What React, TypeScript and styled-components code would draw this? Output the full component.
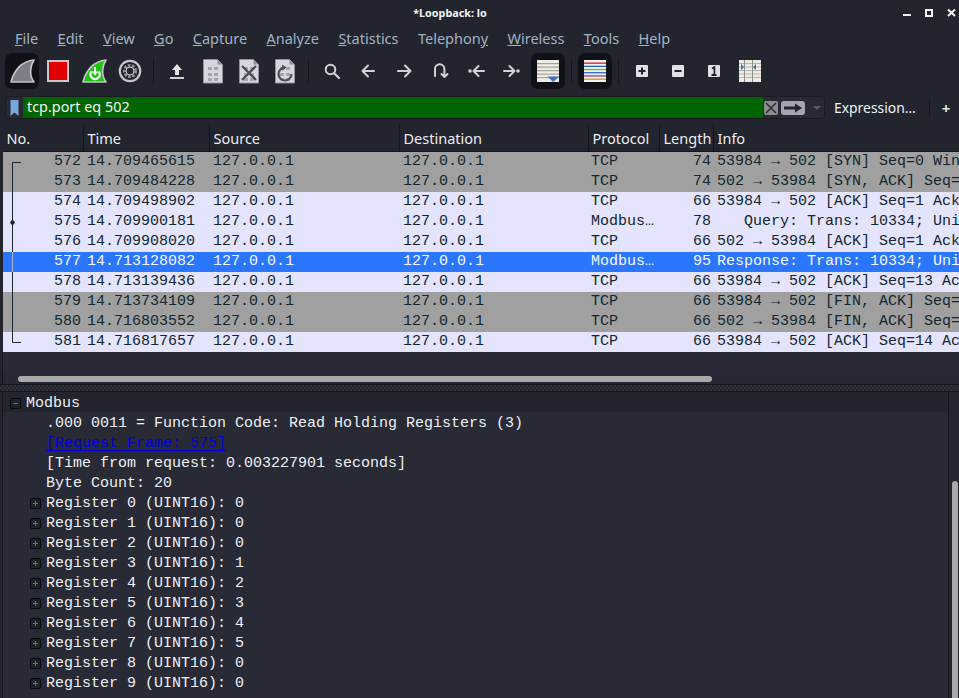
import React from 'react';
import styled, { createGlobalStyle } from 'styled-components';

const MENUS = [
  { before: '', key: 'F', after: 'ile' },
  { before: '', key: 'E', after: 'dit' },
  { before: '', key: 'V', after: 'iew' },
  { before: '', key: 'G', after: 'o' },
  { before: '', key: 'C', after: 'apture' },
  { before: '', key: 'A', after: 'nalyze' },
  { before: '', key: 'S', after: 'tatistics' },
  { before: 'Telephon', key: 'y', after: '' },
  { before: '', key: 'W', after: 'ireless' },
  { before: '', key: 'T', after: 'ools' },
  { before: '', key: 'H', after: 'elp' },
];

type Tone = 'grey' | 'light' | 'selected';
type Mark = 'first' | 'line' | 'dot' | 'last';

const PACKETS: { no: number; time: string; proto: string; len: number; info: string; tone: Tone; mark: Mark }[] = [
  { no: 572, time: '14.709465615', proto: 'TCP', len: 74, info: '53984 → 502 [SYN] Seq=0 Win=65495 Len=0', tone: 'grey', mark: 'first' },
  { no: 573, time: '14.709484228', proto: 'TCP', len: 74, info: '502 → 53984 [SYN, ACK] Seq=0 Ack=1', tone: 'grey', mark: 'line' },
  { no: 574, time: '14.709498902', proto: 'TCP', len: 66, info: '53984 → 502 [ACK] Seq=1 Ack=1 Win=65536', tone: 'light', mark: 'line' },
  { no: 575, time: '14.709900181', proto: 'Modbus…', len: 78, info: '   Query: Trans: 10334; Unit: 1, Func: 3', tone: 'light', mark: 'dot' },
  { no: 576, time: '14.709908020', proto: 'TCP', len: 66, info: '502 → 53984 [ACK] Seq=1 Ack=13 Win=65536', tone: 'light', mark: 'line' },
  { no: 577, time: '14.713128082', proto: 'Modbus…', len: 95, info: 'Response: Trans: 10334; Unit: 1, Func: 3', tone: 'selected', mark: 'line' },
  { no: 578, time: '14.713139436', proto: 'TCP', len: 66, info: '53984 → 502 [ACK] Seq=13 Ack=30 Win=65536', tone: 'light', mark: 'line' },
  { no: 579, time: '14.713734109', proto: 'TCP', len: 66, info: '53984 → 502 [FIN, ACK] Seq=13 Ack=30', tone: 'grey', mark: 'line' },
  { no: 580, time: '14.716803552', proto: 'TCP', len: 66, info: '502 → 53984 [FIN, ACK] Seq=30 Ack=14', tone: 'grey', mark: 'line' },
  { no: 581, time: '14.716817657', proto: 'TCP', len: 66, info: '53984 → 502 [ACK] Seq=14 Ack=31 Win=65536', tone: 'light', mark: 'last' },
];

const REGISTERS = [0, 0, 0, 1, 2, 3, 4, 5, 0, 0];

const DocPage = ({ children }: { children?: React.ReactNode }) => (
  <svg width="36" height="36" viewBox="0 0 36 36">
    <path d="M8.5 6.5h14l5 5v18.5h-19z" fill="#d5d7de" stroke="#8f929b" />
    <path d="M22.5 6.5v5h5z" fill="#8f929b" />
    {[14, 20, 25].map((y) => (
      <g key={y} fill="#a2a5ae">
        <rect x="13" y={y} width="4" height="3" />
        <rect x="19" y={y} width="4" height="3" />
      </g>
    ))}
    {children}
  </svg>
);

const SharkFin = ({ fill, children }: { fill: string; children?: React.ReactNode }) => (
  <svg width="36" height="36" viewBox="0 0 36 36">
    <path d="M30 7C18 8 10 17 7 29h23C25 22 26 13 30 7z" fill={fill} stroke="#c3c5c9" strokeWidth="1.6" strokeLinejoin="round" />
    {children}
  </svg>
);

const Stroke = ({ d }: { d: string }) => (
  <svg width="36" height="36" viewBox="0 0 36 36">
    <path d={d} fill="none" stroke="#d0d2d8" strokeWidth="2" strokeLinecap="round" strokeLinejoin="round" />
  </svg>
);

const SmallKey = ({ label }: { label: string }) => (
  <svg width="36" height="36" viewBox="0 0 36 36">
    <rect x="12" y="12" width="12" height="12" rx="1" fill="#dfe1e8" />
    {label === '+' && <path d="M14.5 18h7M18 14.5v7" stroke="#22252e" strokeWidth="2" />}
    {label === '-' && <path d="M14.5 18h7" stroke="#22252e" strokeWidth="2" />}
    {label === '1' && <path d="M16 15.5l2.4-1.5v8M15.5 22h5" stroke="#22252e" strokeWidth="1.8" fill="none" />}
  </svg>
);

const LinesIcon = ({ colors }: { colors: string[] }) => (
  <svg width="36" height="36" viewBox="0 0 36 36">
    <rect x="7" y="7" width="22" height="22" fill="#f2f2ee" />
    {colors.map((c, i) => (
      <rect key={i} x="7" y={9.5 + i * 3.2} width="22" height="1.3" fill={c} />
    ))}
  </svg>
);

const App = () => {
  return (
    <Window>
      <GlobalStyle />
      <TitleBar>
        <TitleText>*Loopback: lo</TitleText>
        <WindowControls>
          <svg width="12" height="12" viewBox="0 0 12 12"><rect x="1" y="6" width="8" height="2" fill="#f4f4f4" /></svg>
          <svg width="12" height="12" viewBox="0 0 12 12"><rect x="2" y="2" width="6" height="6" fill="none" stroke="#f4f4f4" strokeWidth="2" /></svg>
          <svg width="12" height="12" viewBox="0 0 12 12"><path d="M2 1.5l7 6.5M9 1.5L2 8" stroke="#f4f4f4" strokeWidth="2" /></svg>
        </WindowControls>
      </TitleBar>

      <MenuBar>
        {MENUS.map((m) => (
          <MenuItem key={m.before + m.key + m.after}>
            {m.before}<u>{m.key}</u>{m.after}
          </MenuItem>
        ))}
      </MenuBar>

      <ToolBar>
        <ToolButton $active><SharkFin fill="#7c7f87" /></ToolButton>
        <ToolButton>
          <svg width="36" height="36" viewBox="0 0 36 36">
            <rect x="8" y="8" width="20" height="20" fill="#e10000" stroke="#c8c8c8" strokeWidth="2" />
          </svg>
        </ToolButton>
        <ToolButton>
          <SharkFin fill="#22c414">
            <path d="M15.6 18.5a4.6 4.6 0 1 0 7 0" fill="none" stroke="#fff" strokeWidth="2.2" />
            <path d="M19 14v7" stroke="#fff" strokeWidth="2" />
            <path d="M15.8 18.5L19 22.5l3.2-4z" fill="#fff" />
          </SharkFin>
        </ToolButton>
        <ToolButton>
          <svg width="36" height="36" viewBox="0 0 36 36">
            <circle cx="18" cy="18" r="10.2" fill="none" stroke="#c4c6cc" strokeWidth="2.2" />
            <circle cx="18" cy="18" r="5.4" fill="none" stroke="#8d9097" strokeWidth="3.4" strokeDasharray="2.4 1.4" />
            <circle cx="18" cy="18" r="4" fill="none" stroke="#c4c6cc" strokeWidth="1" />
          </svg>
        </ToolButton>
        <ToolSeparator />
        <ToolButton>
          <svg width="36" height="36" viewBox="0 0 36 36">
            <path d="M18 11l5 6h-3v5h-4v-5h-3z" fill="#e4e5e9" />
            <rect x="11" y="24" width="14" height="2" fill="#d0d2d8" />
          </svg>
        </ToolButton>
        <ToolButton><DocPage /></ToolButton>
        <ToolButton>
          <DocPage><path d="M11 13l14 14M25 13L11 27" stroke="#4b4e57" strokeWidth="2.4" /></DocPage>
        </ToolButton>
        <ToolButton>
          <DocPage>
            <path d="M24.5 21a6.5 6.5 0 1 1-6.5-6.5" fill="none" stroke="#4b4e57" strokeWidth="2.2" />
            <path d="M15 11.5l4.5 3-4 3z" fill="#4b4e57" />
          </DocPage>
        </ToolButton>
        <ToolSeparator />
        <ToolButton>
          <svg width="36" height="36" viewBox="0 0 36 36">
            <circle cx="16.5" cy="16.5" r="4.8" fill="none" stroke="#d0d2d8" strokeWidth="2" />
            <path d="M20 20l5 5" stroke="#d0d2d8" strokeWidth="2.2" strokeLinecap="round" />
          </svg>
        </ToolButton>
        <ToolButton><Stroke d="M24 18H13M18 12.5L12.5 18l5.5 5.5" /></ToolButton>
        <ToolButton><Stroke d="M12 18h12M19 12.5l5.5 5.5-5.5 5.5" /></ToolButton>
        <ToolButton><Stroke d="M13 23v-7a4.7 4.7 0 0 1 9.4 0v7M19.5 21l3 3 3-3" /></ToolButton>
        <ToolButton>
          <svg width="36" height="36" viewBox="0 0 36 36">
            <circle cx="12" cy="18" r="1.8" fill="#d0d2d8" />
            <path d="M26 18H16M20.5 13L15.5 18l5 5" fill="none" stroke="#d0d2d8" strokeWidth="2" strokeLinecap="round" strokeLinejoin="round" />
          </svg>
        </ToolButton>
        <ToolButton>
          <svg width="36" height="36" viewBox="0 0 36 36">
            <circle cx="24" cy="18" r="1.8" fill="#d0d2d8" />
            <path d="M10 18h10M15.5 13l5 5-5 5" fill="none" stroke="#d0d2d8" strokeWidth="2" strokeLinecap="round" strokeLinejoin="round" />
          </svg>
        </ToolButton>
        <ToolButton $active>
          <svg width="36" height="36" viewBox="0 0 36 36">
            <rect x="7" y="7" width="22" height="22" fill="#ecece4" />
            {[10, 13.5, 17, 20.5, 24].map((y) => <rect key={y} x="7" y={y} width="22" height="1.2" fill="#a3a59c" />)}
            <path d="M17.5 23.5h11.5l-5.7 5.5z" fill="#3a70b5" />
          </svg>
        </ToolButton>
        <ToolSeparator />
        <ToolButton $active>
          <LinesIcon colors={['#e8161c', '#2a62c8', '#62c020', '#2a62c8', '#8a3fa8', '#c89a10']} />
        </ToolButton>
        <ToolSeparator />
        <ToolButton><SmallKey label="+" /></ToolButton>
        <ToolButton><SmallKey label="-" /></ToolButton>
        <ToolButton><SmallKey label="1" /></ToolButton>
        <ToolButton>
          <svg width="36" height="36" viewBox="0 0 36 36">
            <rect x="7" y="7" width="22" height="22" fill="#ecece4" />
            {[10, 13.5, 17, 20.5, 24].map((y) => <rect key={y} x="7" y={y} width="22" height="1" fill="#b5b7ae" />)}
            <path d="M12.5 7v22M20.5 7v22" stroke="#8d8f88" strokeWidth="1" />
            <path d="M9 11l3 3-3 3zM24 11l-3 3 3 3z" fill="#3a70b5" />
          </svg>
        </ToolButton>
      </ToolBar>

      <FilterRow>
        <FilterBox>
          <BookmarkSlot>
            <svg width="9" height="18" viewBox="0 0 9 18"><path d="M0.5 1h8v16L4.5 13.5.5 17z" fill="#7ba7dc" /></svg>
          </BookmarkSlot>
          <FilterInput>tcp.port eq 502</FilterInput>
          <ClearButton>
            <svg width="14" height="14" viewBox="0 0 14 14"><path d="M2 2l10 10M12 2L2 12" stroke="#2b2d34" strokeWidth="1.6" /></svg>
          </ClearButton>
          <ApplyButton>
            <svg width="20" height="10" viewBox="0 0 20 10"><path d="M1 3.5h11V0.5L19 5l-7 4.5V6.5H1z" fill="#23252c" /></svg>
          </ApplyButton>
          <Caret />
        </FilterBox>
        <ExpressionLabel>Expression…</ExpressionLabel>
        <FilterSeparator />
        <PlusLabel>+</PlusLabel>
      </FilterRow>

      <PacketPane>
        <HeaderRow>
          <HeaderCell>No.</HeaderCell>
          <HeaderCell>Time</HeaderCell>
          <HeaderCell>Source</HeaderCell>
          <HeaderCell>Destination</HeaderCell>
          <HeaderCell>Protocol</HeaderCell>
          <HeaderCell>Length</HeaderCell>
          <HeaderCell>Info</HeaderCell>
        </HeaderRow>
        {PACKETS.map((p) => (
          <PacketRow key={p.no} $tone={p.tone}>
            <NumberCell>
              <FrameMark viewBox="0 0 20 20" width="20" height="20">
                <path
                  d={
                    p.mark === 'first' ? 'M9.5 10.5H18M9.5 10.5V20'
                      : p.mark === 'last' ? 'M9.5 0V10.5H18'
                      : 'M9.5 0V20'
                  }
                  fill="none"
                  stroke={p.tone === 'selected' ? '#a9b4c8' : '#1a2a33'}
                />
                {p.mark === 'dot' && <circle cx="9.5" cy="10.5" r="2.2" fill="#1a2a33" />}
              </FrameMark>
              {p.no}
            </NumberCell>
            <PacketCell>{p.time}</PacketCell>
            <PacketCell>127.0.0.1</PacketCell>
            <PacketCell>127.0.0.1</PacketCell>
            <ProtocolCell>{p.proto}</ProtocolCell>
            <LengthCell>{p.len}</LengthCell>
            <PacketCell>{p.info}</PacketCell>
          </PacketRow>
        ))}
        <BlankArea />
        <HorizontalTrack>
          <HorizontalThumb />
        </HorizontalTrack>
      </PacketPane>

      <Splitter />

      <DetailPane>
        <DetailList>
          <DetailRow $top>
            <Expander />
            Modbus
          </DetailRow>
          <DetailRow $indent>.000 0011 = Function Code: Read Holding Registers (3)</DetailRow>
          <DetailRow $indent><FrameLink>[Request Frame: 575]</FrameLink></DetailRow>
          <DetailRow $indent>[Time from request: 0.003227901 seconds]</DetailRow>
          <DetailRow $indent>Byte Count: 20</DetailRow>
          {REGISTERS.map((value, i) => (
            <DetailRow key={i} $indent>
              <ChildExpander />
              Register {i} (UINT16): {value}
            </DetailRow>
          ))}
        </DetailList>
        <VerticalTrack>
          <VerticalThumb />
        </VerticalTrack>
      </DetailPane>
    </Window>
  );
};

export default App;

const GlobalStyle = createGlobalStyle`
  html, body {
    margin: 0;
    padding: 0;
    background: #22252e;
  }
`;

const Window = styled.div`
  display: flex;
  flex-direction: column;
  width: 959px;
  height: 698px;
  overflow: hidden;
  background: #22252e;
  color: #e8e8ea;
  font-family: 'Noto Sans', 'Liberation Sans', sans-serif;
`;

const TitleBar = styled.div`
  position: relative;
  flex: none;
  display: flex;
  justify-content: center;
  align-items: center;
  height: 24px;
  padding-right: 59px;
`;

const TitleText = styled.div`
  font-size: 10.8px;
  font-weight: 700;
  color: #f4f4f4;
`;

const WindowControls = styled.div`
  position: absolute;
  right: 1px;
  top: 8px;
  display: flex;
  gap: 10px;
`;

const MenuBar = styled.div`
  flex: none;
  display: flex;
  align-items: center;
  gap: 19.4px;
  height: 27px;
  margin-bottom: 2px;
  padding-left: 15px;
  font-size: 14.5px;
  color: #a4b1c4;
`;

const MenuItem = styled.span`
  white-space: nowrap;
`;

const ToolBar = styled.div`
  flex: none;
  display: flex;
  height: 36px;
  padding-left: 4px;
`;

const ToolButton = styled.div<{ $active?: boolean }>`
  flex: none;
  display: flex;
  justify-content: center;
  align-items: center;
  width: ${(p) => (p.$active ? '34px' : '36px')};
  height: 36px;
  margin: ${(p) => (p.$active ? '0 1px' : '0')};
  border-radius: 7px;
  background: ${(p) => (p.$active ? '#0f1116' : 'transparent')};

  svg {
    flex: none;
  }
`;

const ToolSeparator = styled.div`
  flex: none;
  width: 1px;
  height: 24px;
  margin: 6px 5px 6px 5px;
  background: #14161b;
`;

const FilterRow = styled.div`
  flex: none;
  display: flex;
  align-items: center;
  height: 23px;
  margin-top: 7px;
  padding-left: 5px;
`;

const FilterBox = styled.div`
  display: flex;
  align-items: center;
  width: 820px;
  height: 23px;
  box-sizing: border-box;
  border: 1px solid #1a1c22;
  border-radius: 4px;
  background: #272a35;
`;

const BookmarkSlot = styled.div`
  flex: none;
  display: flex;
  justify-content: center;
  width: 17px;
`;

const FilterInput = styled.div`
  flex: none;
  width: 736px;
  height: 21px;
  padding-left: 4px;
  background: #006400;
  color: #f4f4f4;
  font-size: 14.4px;
  line-height: 20px;
`;

const ClearButton = styled.div`
  flex: none;
  display: flex;
  justify-content: center;
  align-items: center;
  width: 14px;
  height: 14px;
  margin-left: 1px;
  border-radius: 2px;
  background: #8c8d8c;
`;

const ApplyButton = styled.div`
  flex: none;
  display: flex;
  justify-content: center;
  align-items: center;
  width: 24px;
  height: 14px;
  margin-left: 3px;
  border-radius: 3px;
  background: #a3a6b0;
`;

const Caret = styled.div`
  flex: none;
  width: 0;
  height: 0;
  margin-left: 8px;
  border-left: 4px solid transparent;
  border-right: 4px solid transparent;
  border-top: 4px solid #585b63;
`;

const ExpressionLabel = styled.div`
  flex: none;
  margin-left: 9px;
  font-size: 13.9px;
  line-height: 20px;
  color: #eef2f8;
`;

const FilterSeparator = styled.div`
  flex: none;
  width: 1px;
  height: 16px;
  margin-left: 13px;
  background: #14161b;
`;

const PlusLabel = styled.div`
  flex: none;
  margin-left: 12px;
  font-size: 15px;
  font-weight: 700;
  color: #e0e0e0;
`;

const COLUMNS = '81px 126px 190px 189px 71px 54px 1fr';

const PacketPane = styled.div`
  flex: none;
  width: 956px;
  margin: 6px 0 0 3px;
`;

const HeaderRow = styled.div`
  display: grid;
  grid-template-columns: ${COLUMNS};
  height: 26px;
  border-bottom: 1px solid #14161b;
`;

const HeaderCell = styled.div`
  padding-left: 3.5px;
  border-right: 1px solid #14161b;
  font-size: 14.5px;
  line-height: 27px;
  color: #eceef2;

  &:last-child {
    border-right: none;
  }
`;

const TONES = {
  grey: { bg: '#a0a0a0', fg: '#12272e' },
  light: { bg: '#e4e4ff', fg: '#12272e' },
  selected: { bg: '#2a76ff', fg: '#f4f8ff' },
};

const PacketRow = styled.div<{ $tone: Tone }>`
  display: grid;
  grid-template-columns: ${COLUMNS};
  height: 20px;
  background: ${(p) => TONES[p.$tone].bg};
  color: ${(p) => TONES[p.$tone].fg};
  font-family: 'Liberation Mono', monospace;
  font-size: 15px;
  line-height: 19px;
`;

const PacketCell = styled.div`
  min-width: 0;
  padding-left: 3px;
  overflow: hidden;
  white-space: pre;
`;

const NumberCell = styled.div`
  position: relative;
  padding-right: 3px;
  text-align: right;
`;

const FrameMark = styled.svg`
  position: absolute;
  left: 0;
  top: 0;
`;

const ProtocolCell = styled(PacketCell)`
  padding-left: 2px;
`;

const LengthCell = styled.div`
  padding-right: 3px;
  text-align: right;
`;

const BlankArea = styled.div`
  height: 20px;
  background: #282a35;
  box-shadow: -1px 0 0 #14161b;
`;

const HorizontalTrack = styled.div`
  display: flex;
  align-items: flex-start;
  height: 12px;
  padding: 4px 0 0 15px;
  box-sizing: border-box;
  background: #262933;
  box-shadow: -1px 0 0 #14161b;
`;

const HorizontalThumb = styled.div`
  width: 694px;
  height: 6px;
  border-radius: 3px;
  background: #a9a9a9;
`;

const Splitter = styled.div`
  flex: none;
  height: 8px;
  box-sizing: border-box;
  border-top: 1px solid #14161b;
  border-bottom: 1px solid #14161b;
  background: repeating-conic-gradient(#2e313b 0 25%, #23252d 0 50%) 0 0 / 4px 4px;
`;

const DetailPane = styled.div`
  flex: 1;
  display: flex;
  min-height: 0;
  margin-left: 2px;
  border-left: 1px solid #14161b;
  background: #282a35;
`;

const DetailList = styled.div`
  flex: 1;
  min-width: 0;
  font-family: 'Liberation Mono', monospace;
  font-size: 15px;
  color: #eef0f4;
`;

const DetailRow = styled.div<{ $top?: boolean; $indent?: boolean }>`
  position: relative;
  height: 20px;
  padding-left: ${(p) => (p.$indent ? '43px' : '23px')};
  background: ${(p) => (p.$top ? '#23252e' : 'transparent')};
  line-height: 24px;
  white-space: pre;
`;

const Expander = styled.span`
  position: absolute;
  left: 7px;
  top: 6px;
  width: 9px;
  height: 9px;
  border: 1px solid #08090b;
  border-radius: 2px;
  background: #1f2128;

  &::before {
    content: '';
    position: absolute;
    left: 2px;
    right: 2px;
    top: 4px;
    height: 1px;
    background: #6f717a;
  }
`;

const ChildExpander = styled(Expander)`
  left: 27px;

  &::after {
    content: '';
    position: absolute;
    top: 2px;
    bottom: 2px;
    left: 4px;
    width: 1px;
    background: #6f717a;
  }
`;

const FrameLink = styled.span`
  color: #0000e0;
  text-decoration: underline;
  text-underline-offset: 3px;
`;

const VerticalTrack = styled.div`
  flex: none;
  position: relative;
  width: 10px;
  border-left: 1px solid #14161b;
  background: #24272f;
`;

const VerticalThumb = styled.div`
  position: absolute;
  left: 3px;
  top: 89px;
  bottom: -10px;
  width: 6px;
  border-radius: 3px;
  background: #a9a9a9;
`;
